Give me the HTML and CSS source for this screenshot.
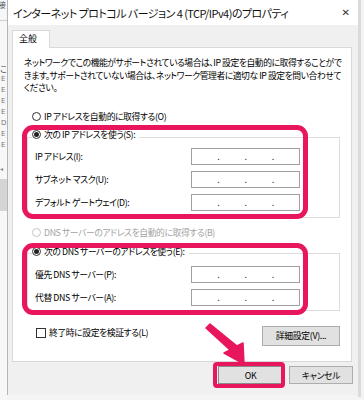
FILE: index.html
```html
<!DOCTYPE html>
<html lang="ja">
<head>
<meta charset="utf-8">
<title>IPv4 プロパティ</title>
<link rel="stylesheet" href="styles.css">
</head>
<body>
<div class="screen">
  <div class="bgwin">
    <span class="bg-top">接</span>
    <span class="bg-line"></span>
    <span class="bg-ko">こ</span>
    <span class="bg-e">E</span>
    <span class="bg-e">E</span>
    <span class="bg-e">E</span>
    <span class="bg-e">E</span>
    <span class="bg-e">D</span>
    <span class="bg-e">E</span>
    <span class="bg-e">E</span>
    <span class="bg-arrow">◂</span>
    <span class="bg-block"></span>
  </div>
  <div class="dialog">
    <div class="titlebar">
      <span class="title">インターネット プロトコル バージョン 4 (TCP/IPv4)のプロパティ</span>
      <span class="close">✕</span>
    </div>
    <div class="dlgbody">
      <div class="tabs"><div class="tab">全般</div></div>
      <div class="panel">
        <p class="desc">ネットワークでこの機能がサポートされている場合は、IP 設定を自動的に取得することがで<br>きます。サポートされていない場合は、ネットワーク管理者に適切な IP 設定を問い合わせて<br>ください。</p>
        <div class="radio r-auto"><span class="rb"></span><span>IP アドレスを自動的に取得する(O)</span></div>
        <div class="group g1">
          <div class="radio legend"><span class="rb on"></span><span>次の IP アドレスを使う(S):</span></div>
          <div class="rows">
            <div class="row"><span>IP アドレス(I):</span><div class="ip"><i>.</i><i>.</i><i>.</i></div></div>
            <div class="row"><span>サブネット マスク(U):</span><div class="ip"><i>.</i><i>.</i><i>.</i></div></div>
            <div class="row"><span>デフォルト ゲートウェイ(D):</span><div class="ip"><i>.</i><i>.</i><i>.</i></div></div>
          </div>
        </div>
        <div class="radio r-dns disabled"><span class="rb"></span><span>DNS サーバーのアドレスを自動的に取得する(B)</span></div>
        <div class="group g2">
          <div class="radio legend"><span class="rb on"></span><span>次の DNS サーバーのアドレスを使う(E):</span></div>
          <div class="rows">
            <div class="row"><span>優先 DNS サーバー(P):</span><div class="ip"><i>.</i><i>.</i><i>.</i></div></div>
            <div class="row"><span>代替 DNS サーバー(A):</span><div class="ip"><i>.</i><i>.</i><i>.</i></div></div>
          </div>
        </div>
        <div class="bottomrow">
          <div class="check"><span class="cb"></span><span>終了時に設定を検証する(L)</span></div>
          <div class="btn adv">詳細設定(V)...</div>
        </div>
      </div>
      <div class="buttons">
        <div class="btn ok">OK</div>
        <div class="btn cancel">キャンセル</div>
      </div>
    </div>
  </div>
  <div class="shadow"></div>
  <div class="hl hl1"></div>
  <div class="hl hl2"></div>
  <div class="hl hl3"></div>
  <svg class="arrow" viewBox="0 0 364 400" width="364" height="400">
    <polygon points="206,328 210,324 237,346 243,343 244,364 224,353 230,350" fill="#e8175d" stroke="#e8175d" stroke-width="1.5" stroke-linejoin="round"/>
  </svg>
</div>
</body>
</html>
```

FILE: styles.css
```css
* { box-sizing: border-box; }
html, body { margin: 0; padding: 0; background: #f4f4f4; }
body {
  font-family: "Noto Sans CJK JP", "Noto Sans", sans-serif;
  font-feature-settings: "palt";
  color: #000;
}
.screen {
  position: relative;
  width: 364px;
  height: 400px;
  overflow: hidden;
  display: flex;
  align-items: flex-start;
}
.bgwin {
  width: 7px;
  height: 400px;
  background: #f7f7f7;
  display: flex;
  flex-direction: column;
  font-size: 9px;
  color: #555;
  overflow: hidden;
  flex: none;
}
.bg-top { margin-left: -2px; line-height: 10px; font-size: 8px; }
.bg-line { height: 1px; background: #cfcfcf; margin-top: 10px; }
.bg-ko { margin-top: 43px; margin-left: 0; line-height: 10px; font-size: 8px; }
.bg-e { margin-left: 1px; line-height: 11px; color: #777; font-family: "DejaVu Sans", sans-serif; font-size: 7px; }
.bg-e:first-of-type { margin-top: 6px; }
.bg-arrow { margin-top: 14px; font-size: 6px; color: #888; line-height: 8px; }
.bg-block { height: 32px; background: #d5d5d5; margin-top: 6px; }

.dialog {
  width: 351px;
  flex: none;
  background: #f0f0f0;
  border-left: 1px solid #b5b5b5;
  display: flex;
  flex-direction: column;
  height: 395px;
}
.shadow {
  width: 3px;
  height: 397px;
  background: #dadada;
  flex: none;
}
.titlebar {
  height: 25px;
  background: #fff;
  display: flex;
  align-items: center;
  justify-content: space-between;
  padding: 0 8px 0 5px;
}
.title {
  font-size: 11px;
  letter-spacing: -0.55px;
  color: #111;
}
.close {
  font-family: "DejaVu Sans", sans-serif;
  font-size: 10px;
  color: #333;
}
.dlgbody {
  flex: 1;
  display: flex;
  flex-direction: column;
  padding: 5px 6px 0 4px;
}
.tabs { display: flex; height: 17px; }
.tab {
  width: 38px;
  height: 18px;
  background: #fff;
  border: 1px solid #d9d9d9;
  border-bottom: none;
  font-size: 9px;
  line-height: 15px;
  padding-left: 6px;
  position: relative;
  z-index: 1;
}
.panel {
  background: #fff;
  border: 1px solid #d9d9d9;
  padding: 9px 0 12px 11px;
  height: 315px;
  font-size: 8.8px;
  letter-spacing: -0.4px;
}
.desc {
  margin: 0;
  line-height: 12.6px;
  font-size: 8.8px;
  white-space: nowrap;
  letter-spacing: -0.45px;
}
.radio {
  display: flex;
  align-items: center;
  height: 14px;
  gap: 3px;
  white-space: nowrap;
}
.rb {
  width: 9px;
  height: 9px;
  border: 1px solid #333;
  border-radius: 50%;
  background: #fff;
  display: flex;
  align-items: center;
  justify-content: center;
  flex: none;
}
.rb.on::after {
  content: "";
  width: 5px;
  height: 5px;
  border-radius: 50%;
  background: #222;
}
.r-auto { margin: 15px 0 0 8px; }
.r-dns { margin: 8px 0 0 8px; }
.disabled { color: #a3a3a3; }
.disabled .rb { border-color: #c5c5c5; }
.group {
  border: 1px solid #dcdcdc;
  margin: 13px 11px 0 3px;
  padding: 0 39px 0 7px;
}
.g1 { padding-bottom: 6px; }
.g2 { padding-bottom: 4px; }
.legend {
  margin-left: -3px;
  background: #fff;
  align-self: flex-start;
  width: max-content;
  padding-right: 4px;
}
.g1 .legend { margin-top: -10px; }
.g2 .legend { margin-top: -9px; }
.rows {
  display: flex;
  flex-direction: column;
  gap: 6px;
}
.g1 .rows { margin-top: 6px; }
.g2 .rows { margin-top: 7px; }
.row {
  display: flex;
  align-items: center;
  justify-content: space-between;
  height: 17px;
  white-space: nowrap;
}
.ip {
  width: 109px;
  height: 17px;
  border: 1px solid #a0a0a0;
  background: #fff;
  display: flex;
  justify-content: space-evenly;
  align-items: center;
}
.ip i {
  font-style: normal;
  font-size: 9px;
  line-height: 9px;
  color: #333;
  margin-top: 1px;
}
.bottomrow {
  display: flex;
  justify-content: space-between;
  align-items: flex-start;
  margin: 15px 11px 0 0;
}
.check {
  display: flex;
  align-items: center;
  gap: 3px;
  height: 14px;
  margin: 0 0 0 12px;
}
.cb {
  width: 10px;
  height: 10px;
  border: 1px solid #333;
  background: #fff;
}
.btn {
  background: #e1e1e1;
  border: 1px solid #adadad;
  display: flex;
  align-items: center;
  justify-content: center;
  font-size: 8.8px;
  letter-spacing: -0.3px;
  white-space: nowrap;
}
.adv { width: 78px; height: 20px; }
.buttons {
  display: flex;
  justify-content: flex-end;
  gap: 6px;
  margin: 4px -1px 0 0;
}
.ok { width: 65px; height: 18px; border-color: #8a8a8a; }
.cancel { width: 64px; height: 18px; }

.hl {
  position: absolute;
  border: 5px solid #e8175d;
  pointer-events: none;
}
.hl1 { left: 22px; top: 125px; width: 286px; height: 94px; border-radius: 11px; }
.hl2 { left: 22px; top: 243px; width: 286px; height: 72px; border-radius: 11px; }
.hl3 { left: 213px; top: 362px; width: 72px; height: 26px; border-radius: 4px; border-width: 4px; }
.arrow {
  position: absolute;
  left: 0;
  top: 0;
  pointer-events: none;
}
```
